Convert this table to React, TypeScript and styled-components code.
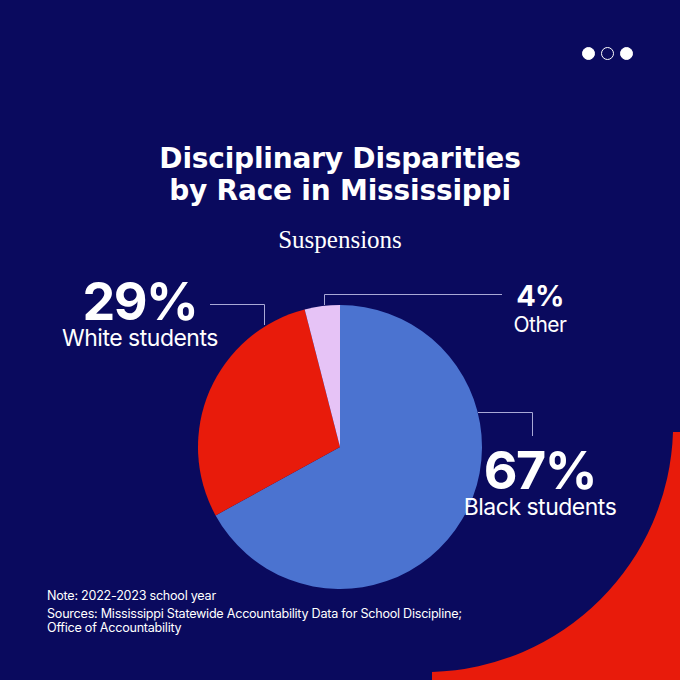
import styled, { createGlobalStyle } from 'styled-components';

const NAVY = '#0a0a5e';
const LINE = '#a9a9d6';

const SLICES = [
    { value: 67, color: '#4b73d0' },
    { value: 29, color: '#e81b0b' },
    { value: 4, color: '#e6c3f6' },
];

const CX = 340;
const CY = 177;
const R = 142;

function point(turn: number) {
    const a = turn * Math.PI * 2;
    return [CX + R * Math.sin(a), CY - R * Math.cos(a)];
}

function slicePath(from: number, to: number) {
    const [x1, y1] = point(from);
    const [x2, y2] = point(to);
    const large = to - from > 0.5 ? 1 : 0;
    return `M${CX} ${CY} L${x1} ${y1} A${R} ${R} 0 ${large} 1 ${x2} ${y2} Z`;
}

const LABELS = [
    { value: '29%', caption: 'White students', x: 140, y: 8, size: 'lg' },
    { value: '4%', caption: 'Other', x: 540, y: 11, size: 'sm' },
    { value: '67%', caption: 'Black students', x: 540, y: 177, size: 'lg' },
];

export default function App() {
    let acc = 0;
    return (
        <>
            <GlobalStyle />
            <Page>
                <Swoosh viewBox='0 0 680 680'>
                    <path d='M673 432 H680 V680 H432 V672 A248 248 0 0 0 673 432 Z' fill='#e81b0b' />
                </Swoosh>
                <TopBar>
                    <Dot />
                    <Dot $hollow />
                    <Dot />
                </TopBar>
                <Title>
                    Disciplinary Disparities
                    <br />
                    by Race in Mississippi
                </Title>
                <Subtitle>Suspensions</Subtitle>
                <Chart>
                    <svg width='680' height='319' viewBox='0 0 680 319'>
                        {SLICES.map((s, i) => {
                            const from = acc;
                            acc += s.value / 100;
                            return <path key={i} d={slicePath(from, acc)} fill={s.color} />;
                        })}
                        <g fill='none' stroke={LINE} strokeWidth='1'>
                            <path d='M210 34.5 H264.5 V55' />
                            <path d='M324.5 35 V24.5 H502' />
                            <path d='M478 142.5 H532.5 V166' />
                        </g>
                    </svg>
                    {LABELS.map((l) => (
                        <Label key={l.value} style={{ left: l.x, top: l.y }}>
                            <Value $size={l.size}>{l.value}</Value>
                            <Caption $size={l.size}>{l.caption}</Caption>
                        </Label>
                    ))}
                </Chart>
                <Notes>
                    <Note>Note: 2022-2023 school year</Note>
                    <Sources>
                        Sources: Mississippi Statewide Accountability Data for School Discipline;
                        <br />
                        Office of Accountability
                    </Sources>
                </Notes>
            </Page>
        </>
    );
}

const GlobalStyle = createGlobalStyle`
    html, body {
        margin: 0;
        padding: 0;
        background: ${NAVY};
    }
    * {
        box-sizing: border-box;
    }
`;

const Page = styled.main`
    position: relative;
    width: 680px;
    height: 680px;
    overflow: hidden;
    background: ${NAVY};
    color: #ffffff;
    font-family: Inter, 'Liberation Sans', sans-serif;
`;

const Swoosh = styled.svg`
    position: absolute;
    inset: 0;
    width: 680px;
    height: 680px;
`;

const TopBar = styled.header`
    position: relative;
    display: flex;
    justify-content: flex-end;
    gap: 6px;
    padding: 47px 47px 0 0;
`;

const Dot = styled.span<{ $hollow?: boolean }>`
    width: 13px;
    height: 13px;
    border-radius: 50%;
    background: ${(p) => (p.$hollow ? 'transparent' : '#ffffff')};
    border: 1.5px solid #ffffff;
`;

const Title = styled.h1`
    position: relative;
    margin: 83px 0 0;
    text-align: center;
    font-family: 'DejaVu Sans', Inter, sans-serif;
    font-size: 28px;
    line-height: 32px;
    font-weight: 700;
    letter-spacing: -0.2px;
`;

const Subtitle = styled.h2`
    position: relative;
    margin: 21px 0 0;
    text-align: center;
    font-family: 'Liberation Serif', serif;
    font-weight: 400;
    font-size: 25px;
    line-height: 24px;
`;

const Chart = styled.section`
    position: relative;
    margin-top: 18px;
    width: 680px;
    height: 319px;

    svg {
        display: block;
    }
`;

const Label = styled.div`
    position: absolute;
    display: flex;
    flex-direction: column;
    align-items: center;
    transform: translateX(-50%);
    white-space: nowrap;
`;

const Value = styled.div<{ $size: string }>`
    font-size: ${(p) => (p.$size === 'lg' ? '52px' : '29px')};
    line-height: ${(p) => (p.$size === 'lg' ? '48px' : '29px')};
    font-weight: 700;
    letter-spacing: ${(p) => (p.$size === 'lg' ? '-1.5px' : '-0.8px')};
`;

const Caption = styled.div<{ $size: string }>`
    margin-top: ${(p) => (p.$size === 'lg' ? '1px' : '4px')};
    font-size: ${(p) => (p.$size === 'lg' ? '23px' : '21px')};
    line-height: 1;
    font-weight: 400;
    letter-spacing: -0.5px;
`;

const Notes = styled.footer`
    position: relative;
    padding-left: 47px;
    font-size: 12.6px;
    line-height: 14px;
    letter-spacing: -0.25px;
`;

const Note = styled.p`
    margin: 0 0 4px;
`;

const Sources = styled.p`
    margin: 0;
`;
